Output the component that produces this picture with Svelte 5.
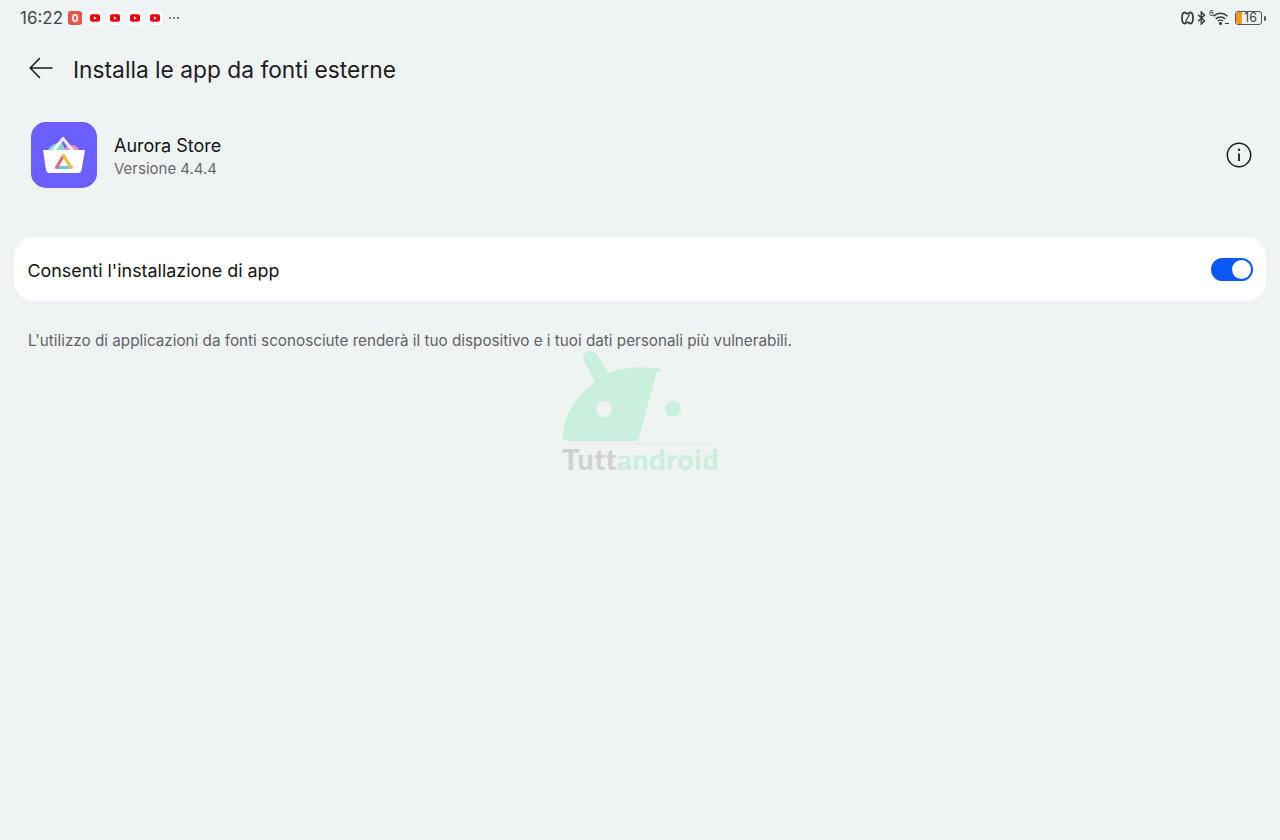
<script>
  const notifs = [0, 1, 2, 3];
</script>

<div class="page">
  <div class="status">
    <div class="left">
      <span class="time">16:22</span>
      <span class="badge-o">0</span>
      {#each notifs as n (n)}
        <span class="yt"><svg width="11" height="8" viewBox="0 0 11 8"><rect width="11" height="8" rx="2" fill="#e8000d"/><path d="M4.300 2.200 7.200 4 4.300 5.800z" fill="#fff"/></svg></span>
      {/each}
      <span class="dots"><i></i><i></i><i></i></span>
    </div>
    <div class="right">
      <svg width="13" height="14" viewBox="0 0 13 14" fill="none" stroke="#3c3f42" stroke-width="1.800"><path d="M3.600 1.500C1.800 1.500 1 3.400 1 7s.8 5.500 2.600 5.500c1.500 0 1.700-1.300 2.900-1.300s1.400 1.300 2.900 1.300c1.800 0 2.600-1.900 2.600-5.500s-.8-5.500-2.600-5.500C7.900 1.500 7.700 2.800 6.500 2.800S5.100 1.500 3.600 1.500z"/><path d="M4.500 10.500 8.500 3.500" stroke-width="1.300"/></svg>
      <svg class="bt" width="9" height="14" viewBox="0 0 9 14" fill="none" stroke="#3c3f42" stroke-width="1.500"><path d="M1 3.800 7.500 9.800 4.300 13V1l3.200 3.200L1 10.200"/></svg>
      <svg class="wifi" width="22" height="20" viewBox="0 -2 22 20" fill="none" stroke="#3c3f42" stroke-width="1.600"><text x="0" y="6" font-size="8" font-family="Inter, sans-serif" fill="#3c3f42" stroke="none">6</text><path d="M4.500 6.200C8.500 2.300 14.500 2.300 18.500 6.200M6.800 8.800C9.500 6.300 13.500 6.300 16.200 8.800M9 11C10.300 9.900 12.700 9.900 14 11"/><circle cx="11.500" cy="13.500" r="1.600" fill="#3c3f42" stroke="none"/><path d="M16 13.500h4" stroke-width="1"/></svg>
      <span class="battery"><span class="fill"></span><span class="num">16</span></span>
      <span class="nub"></span>
    </div>
  </div>

  <header class="top">
    <svg class="back" width="24" height="24" viewBox="0 0 24 24" fill="none" stroke="#1b1d1f" stroke-width="1.600" stroke-linecap="round" stroke-linejoin="round"><path d="M23 12H1.500M10.500 2.500 1.200 12l9.300 9.500"/></svg>
    <h1>Installa le app da fonti esterne</h1>
  </header>

  <section class="app">
    <div class="icon">
      <svg width="66" height="66" viewBox="0 0 66 66">
        <rect width="66" height="66" rx="15" fill="#6c5fff"/>
        <path d="M17 29c1-5 7-8.500 14-8.500l4 8.500z" fill="#8fd6c8"/>
        <path d="M33 29l3-5c5-1.500 11-1 12 5z" fill="#ea92bb"/>
        <path d="M22 29 32 16.500 42 29" fill="none" stroke="#fff" stroke-width="3.200" stroke-linejoin="round" opacity=".85"/>
        <path d="M12 28h42l-3.500 20c-.4 2-1.600 3-3.500 3H18.500c-2 0-3-1-3.500-3z" fill="#fff"/>
        <path d="M25.500 45.500h15" stroke="#6cc4e8" stroke-width="3" fill="none" stroke-linecap="round"/>
        <path d="M32.500 33.500 25.500 45.500" stroke="#ee5f7c" stroke-width="3" fill="none" stroke-linecap="round"/>
        <path d="M32.500 33.500 40 45.500" stroke="#f7bd34" stroke-width="3" fill="none" stroke-linecap="round"/>
      </svg>
    </div>
    <div class="meta">
      <div class="name">Aurora Store</div>
      <div class="ver">Versione 4.4.4</div>
    </div>
    <svg class="info" width="26" height="26" viewBox="0 0 26 26" fill="none" stroke="#1b1d1f"><circle cx="13" cy="13" r="11.700" stroke-width="1.500"/><circle cx="13" cy="7.800" r="1.200" fill="#1b1d1f" stroke="none"/><path d="M13 11.500v7.500" stroke-width="1.800"/></svg>
  </section>

  <section class="card">
    <span class="label">Consenti l'installazione di app</span>
    <span class="toggle"><span class="knob"></span></span>
  </section>

  <p class="note">L'utilizzo di applicazioni da fonti sconosciute renderà il tuo dispositivo e i tuoi dati personali più vulnerabili.</p>

  <div class="mark">
    <svg width="156" height="96" viewBox="0 0 156 96">
      <path d="M47 24C62 18 80 17 99 20L99 23 94.700 23 76 92H5Q1 92 1 87C1 68 14 46 33 33L22 13A6.500 6.500 0 0 1 35 6Z" fill="#c9efdd"/>
      <circle cx="42" cy="60" r="8" fill="#f0f3f4"/>
      <circle cx="111" cy="60" r="8" fill="#c9efdd"/>
      <path d="M76 94.500H150" stroke="#e4e7e9" stroke-width="1"/>
    </svg>
    <div class="wm"><span class="g">Tutt</span><span class="a">android</span></div>
  </div>
</div>

<style>
  :global(body) {
    margin: 0;
    background: #f0f3f4;
  }
  .page {
    position: relative;
    width: 1280px;
    height: 840px;
    box-sizing: border-box;
    padding: 0 14px;
    background: #f0f3f4;
    font-family: Inter, "Noto Sans", sans-serif;
    overflow: hidden;
  }
  .status {
    height: 36px;
    margin: 0 -14px;
    padding: 0 14px 0 20px;
    display: flex;
    justify-content: space-between;
    align-items: center;
    color: #45484b;
  }
  .left, .right { display: flex; align-items: center; }
  .time { font-size: 17px; margin-right: 5px; letter-spacing: 0; }
  .badge-o {
    width: 14px; height: 14px; border-radius: 3px;
    background: #e2574a; color: #fff;
    font-size: 10px; font-weight: 700; line-height: 14px; text-align: center;
    margin-right: 6px;
  }
  .yt {
    width: 14px; height: 14px; border-radius: 3px; background: #fff;
    display: flex; align-items: center; justify-content: center;
    margin-right: 6px;
  }
  .yt svg { width: 10px; height: 8px; }
  .dots { display: flex; gap: 2px; margin-left: 1px; }
  .dots i { width: 2px; height: 2px; border-radius: 50%; background: #55585b; }
  .right { gap: 4px; }
  .bt { margin-left: -1px; }
  .wifi { margin-left: -1px; }
  .battery {
    position: relative;
    width: 25px; height: 12px; margin-left: 0;
    border: 1px solid #55585b; border-radius: 3px;
    overflow: hidden; box-sizing: content-box;
    display: flex; align-items: center; justify-content: center;
  }
  .fill { position: absolute; left: 0; top: 0; bottom: 0; width: 6px; background: #f39a1e; }
  .num { position: relative; left: 2px; font-size: 12.500px; line-height: 12px; color: #3c3f42; }
  .nub { width: 2px; height: 5px; margin-left: -2px; background: #55585b; border-radius: 1px; }
  .top {
    height: 66px;
    display: flex;
    align-items: center;
    padding-left: 15px;
  }
  .back { margin-right: 20px; margin-bottom: 2px; }
  h1 {
    margin: 0;
    font-size: 22.750px;
    font-weight: 420;
    color: #1b1d1f;
  }
  .app {
    margin-top: 20px;
    height: 66px;
    display: flex;
    align-items: center;
    padding: 0 14px 0 17px;
  }
  .icon { width: 66px; height: 66px; }
  .meta { margin-left: 17px; flex: 1; padding-top: 3px; }
  .name { font-size: 18px; font-weight: 420; color: #111315; line-height: 24px; }
  .ver { font-size: 15px; color: #66696c; line-height: 22px; }
  .card {
    margin-top: 49px;
    height: 64px;
    background: #fff;
    border-radius: 20px;
    display: flex;
    align-items: center;
    justify-content: space-between;
    padding: 0 13px 0 13.500px;
  }
  .label { font-size: 17.900px; font-weight: 420; color: #111315; position: relative; top: 1px; }
  .toggle {
    width: 42px; height: 23px; border-radius: 12px; background: #0a59f7;
    display: flex; justify-content: flex-end; align-items: center;
    padding-right: 2px; box-sizing: border-box;
  }
  .knob { width: 19px; height: 19px; border-radius: 50%; background: #fff; }
  .note {
    margin: 30px 0 0;
    padding-left: 14px;
    font-size: 15.250px;
    line-height: 20px;
    color: #5f6265;
  }
  .mark {
    position: absolute;
    left: 562px;
    top: 349px;
    width: 156px;
  }
  .mark svg { display: block; }
  .wm {
    margin-top: -1px;
    font-family: Lato, sans-serif;
    font-size: 29px;
    font-weight: 900;
    line-height: 30px;
    letter-spacing: .4px;
    white-space: nowrap;
  }
  .g { color: #cfd2d4; }
  .a { color: #c9efdd; }
</style>
